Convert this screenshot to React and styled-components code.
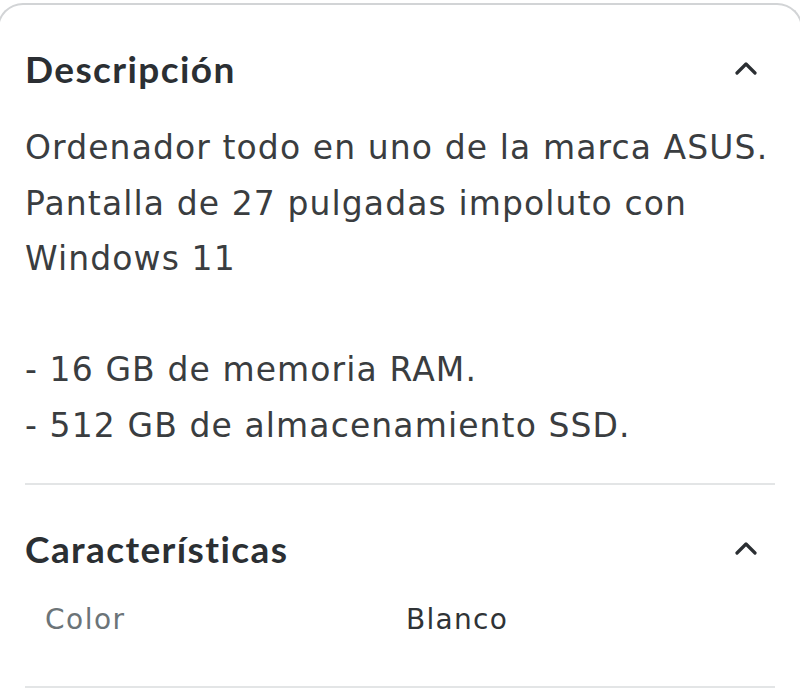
import React from 'react';
import styled, {createGlobalStyle} from 'styled-components';

const GlobalStyle = createGlobalStyle`
  html, body {
    margin: 0;
    padding: 0;
    background: #ffffff;
  }
  body {
    font-family: "DejaVu Sans", "Open Sans", sans-serif;
    overflow: hidden;
  }
`;

const description = [
  'Ordenador todo en uno de la marca ASUS.',
  'Pantalla de 27 pulgadas impoluto con',
  'Windows 11',
  '',
  '- 16 GB de memoria RAM.',
  '- 512 GB de almacenamiento SSD.',
];

const features = [
  {label: 'Color', value: 'Blanco'},
];

function ChevronUp() {
  return (
    <svg width="22" height="14" viewBox="0 0 22 14" fill="none">
      <path d="M2 12L11 3L20 12" stroke="#2b2f33" strokeWidth="3.2" strokeLinecap="round" strokeLinejoin="round"/>
    </svg>
  );
}

function Section(props) {
  return (
    <StyledSection>
      <Header>
        <Title>{props.title}</Title>
        <Toggle><ChevronUp/></Toggle>
      </Header>
      {props.children}
    </StyledSection>
  );
}

export default function App() {
  return (
    <>
      <GlobalStyle/>
      <Card>
        <Section title="Descripción">
          <Description>
            {description.map((line, i) => (
              <Line key={i}>{line === '' ? '\u00a0' : line}</Line>
            ))}
          </Description>
        </Section>
        <Section title="Características">
          <FeatureList>
            {features.map(f => (
              <FeatureRow key={f.label}>
                <FeatureLabel>{f.label}</FeatureLabel>
                <FeatureValue>{f.value}</FeatureValue>
              </FeatureRow>
            ))}
          </FeatureList>
        </Section>
      </Card>
    </>
  );
}

const Card = styled.div`
  margin: 3px -3px 0 -3px;
  border: 2px solid #d2d4d6;
  border-bottom: none;
  border-radius: 26px 26px 0 0;
  padding: 0 26px 0 26px;
  height: 720px;
  box-sizing: border-box;
`;

const StyledSection = styled.section`
  border-bottom: 2px solid #e3e5e6;
`;

const Header = styled.div`
  display: flex;
  align-items: center;
  justify-content: space-between;
  height: 102px;
  padding-top: 24px;
  box-sizing: border-box;
`;

const Title = styled.h2`
  margin: 0;
  font-family: "Lato", "Open Sans", sans-serif;
  font-size: 37px;
  font-weight: 700;
  letter-spacing: 1.4px;
  color: #2b2f33;
`;

const Toggle = styled.span`
  display: flex;
  margin-right: 18px;
`;

const Description = styled.div`
  padding-top: 13px;
  padding-bottom: 30px;
`;

const Line = styled.div`
  font-size: 33px;
  line-height: 55.5px;
  letter-spacing: 1.1px;
  color: #3a3d40;
  white-space: nowrap;
`;

const FeatureList = styled.div`
  padding: 10px 0 45px 20px;
`;

const FeatureRow = styled.div`
  display: grid;
  grid-template-columns: 361px 1fr;
  align-items: center;
  height: 44px;
`;

const FeatureLabel = styled.span`
  font-size: 28px;
  letter-spacing: 1.5px;
  color: #6c7478;
`;

const FeatureValue = styled.span`
  font-size: 28px;
  letter-spacing: 1.3px;
  color: #2f3336;
`;
